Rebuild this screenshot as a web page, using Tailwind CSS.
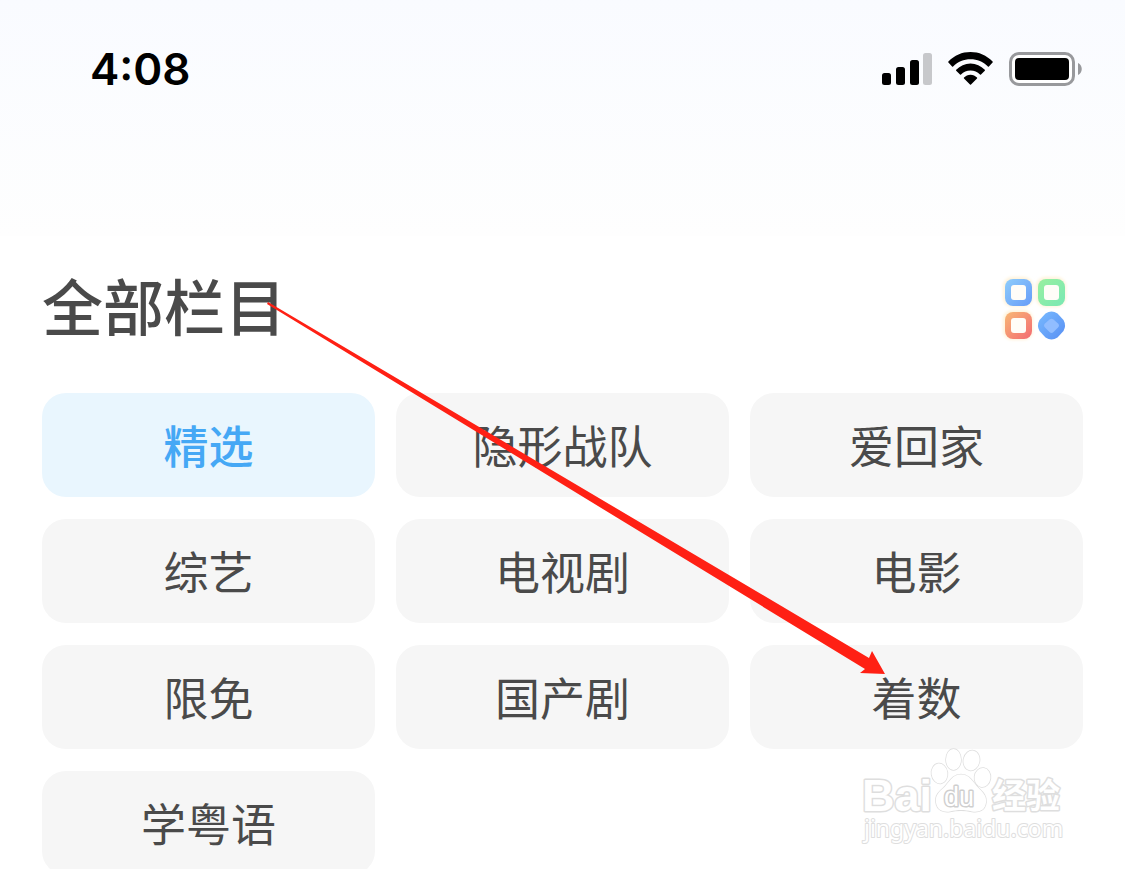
<!DOCTYPE html>
<html lang="zh-CN">
<head>
<meta charset="utf-8">
<meta name="viewport" content="width=device-width, initial-scale=1">
<title>全部栏目</title>
<script src="https://cdn.jsdelivr.net/npm/@tailwindcss/browser@4"></script>
</head>
<body class="relative h-screen overflow-hidden bg-white font-['Noto_Sans_CJK_SC',sans-serif] text-[#4a4a4a]">
<div class="h-[236px] bg-linear-to-b from-[#f9fbff] to-[#fefefe]">
  <header class="flex items-center justify-between pt-[44px] pr-[42px] pl-[90px] text-black">
    <time class="font-['Inter',sans-serif] text-[44px] leading-[50px] font-semibold">4:08</time>
    <div class="flex items-center gap-4">
      <svg class="h-[34px] w-[51px]" viewBox="0 0 51 34" role="img" aria-label="信号">
        <rect x="1" y="21" width="9" height="12" rx="2.5"/>
        <rect x="15" y="15" width="9" height="18" rx="2.5"/>
        <rect x="29" y="8" width="9" height="25" rx="2.5"/>
        <rect x="42" y="1" width="9" height="32" rx="2.5" fill="#c7c8cb"/>
      </svg>
      <svg class="h-[34px] w-[45px]" viewBox="0 0 45 34" role="img" aria-label="无线网络">
        <path d="M.4 9.600C6.500 3.200 14 0 22.500 0S38.500 3.200 44.600 9.600c.3.300.3.700 0 1l-3.700 3.800c-.3.300-.7.300-1 0C35 9.700 29.300 7.200 22.500 7.200S10 9.700 5.100 14.400c-.3.300-.7.300-1 0L.4 10.600c-.3-.3-.3-.7 0-1Z"/>
        <path d="M8.200 17.700c3.900-4 8.700-6.300 14.300-6.300s10.400 2.300 14.300 6.300c.3.300.3.700 0 1L33 22.500c-.3.300-.7.300-1 0-2.600-2.500-5.700-3.900-9.500-3.900s-6.900 1.400-9.500 3.900c-.3.300-.7.300-1 0l-3.800-3.800c-.3-.3-.3-.7 0-1Z"/>
        <path d="M16 25.600c1.700-1.700 3.900-2.800 6.500-2.800s4.800 1.100 6.500 2.800c.3.300.3.700 0 1L23 32.600c-.3.300-.7.300-1 0l-6-6c-.3-.3-.3-.7 0-1Z"/>
      </svg>
      <svg class="h-[34px] w-[74px]" viewBox="0 0 74 34" role="img" aria-label="电池">
        <rect x="1.500" y="1.500" width="63" height="31" rx="8.500" fill="#fff" stroke="#98999c" stroke-width="3"/>
        <rect x="6" y="6" width="54" height="22" rx="4"/>
        <path d="M69 11c5 2 5 10 0 12Z" fill="#98999c"/>
      </svg>
    </div>
  </header>
</div>
<main class="px-[42px]">
  <div class="flex items-center justify-between pt-[33px] pr-[13px]">
    <h1 class="pb-2 text-[61px] leading-[72px] font-medium">全部栏目</h1>
    <button type="button" aria-label="切换布局" class="size-[70px]">
      <svg class="size-full" viewBox="0 0 70 70" fill="none">
        <defs>
          <linearGradient id="blue" x1="0" y1="0" x2="1" y2="1"><stop stop-color="#8fcdfb"/><stop offset="1" stop-color="#669bf8"/></linearGradient>
          <linearGradient id="green" x1="0" y1="0" x2="1" y2="1"><stop stop-color="#9af0a0"/><stop offset="1" stop-color="#79e8b4"/></linearGradient>
          <linearGradient id="red" x1="0" y1="0" x2="1" y2="1"><stop stop-color="#f8b875"/><stop offset="1" stop-color="#f36b72"/></linearGradient>
          <linearGradient id="gem" x1="0" y1="0" x2="1" y2="1"><stop stop-color="#78baff"/><stop offset="1" stop-color="#588ff3"/></linearGradient>
          <filter id="glow" x="-20%" y="-20%" width="140%" height="140%"><feGaussianBlur stdDeviation="1.500"/></filter>
        </defs>
        <g filter="url(#glow)" fill="#fff3da">
          <rect x="3" y="3" width="30" height="30" rx="9"/><rect x="36" y="3" width="30" height="30" rx="9"/><rect x="3" y="36" width="30" height="30" rx="9"/>
        </g>
        <rect x="5" y="5" width="27" height="27" rx="8" fill="url(#blue)"/>
        <rect x="11" y="11" width="15" height="15" rx="3" fill="#fffdf8"/>
        <rect x="38" y="5" width="27" height="27" rx="8" fill="url(#green)"/>
        <rect x="44" y="11" width="15" height="15" rx="3" fill="#fffdf8"/>
        <rect x="5" y="38" width="27" height="27" rx="8" fill="url(#red)"/>
        <rect x="11" y="44" width="15" height="15" rx="3" fill="#fffdf8"/>
        <path d="M45.500 39.500q6-4 12 0l6 6.500q3 5.500 0 11l-6 6.500q-6 4-12 0l-6-6.500q-3-5.500 0-11Z" fill="url(#gem)"/>
        <path d="M49.500 45.500q2-1.500 4 0l4.500 4q2 2 0 4l-4.500 4.500q-2 2-4 0L45 53.500q-2-2 0-4Z" fill="#91bdff"/>
      </svg>
    </button>
  </div>
  <nav aria-label="栏目" class="mt-[44px] grid grid-cols-3 gap-x-[21px] gap-y-[22px] text-[45px] leading-[60px]">
    <button type="button" aria-current="true" class="h-[104px] rounded-3xl bg-[#e9f6fe] font-medium text-[#45a8f5]">精选</button>
    <button type="button" class="h-[104px] rounded-3xl bg-[#f6f6f6]">隐形战队</button>
    <button type="button" class="h-[104px] rounded-3xl bg-[#f6f6f6]">爱回家</button>
    <button type="button" class="h-[104px] rounded-3xl bg-[#f6f6f6]">综艺</button>
    <button type="button" class="h-[104px] rounded-3xl bg-[#f6f6f6]">电视剧</button>
    <button type="button" class="h-[104px] rounded-3xl bg-[#f6f6f6]">电影</button>
    <button type="button" class="h-[104px] rounded-3xl bg-[#f6f6f6]">限免</button>
    <button type="button" class="h-[104px] rounded-3xl bg-[#f6f6f6]">国产剧</button>
    <button type="button" class="h-[104px] rounded-3xl bg-[#f6f6f6]">着数</button>
    <button type="button" class="h-[104px] rounded-3xl bg-[#f6f6f6]">学粤语</button>
  </nav>
</main>
<!-- Arrow from the heading to the 着数 button -->
<svg class="pointer-events-none absolute top-[300px] left-[265px] h-[380px] w-[625px]" viewBox="265 300 625 380" aria-hidden="true">
  <path d="M268 302 869 658 872 651 885 674 860 673 865 669 267 304Z" fill="#ff2014"/>
</svg>
<!-- Watermark -->
<svg class="pointer-events-none absolute top-[740px] left-[850px] h-[110px] w-[230px]" viewBox="0 0 230 110" fill="#fff" stroke="#dedede" stroke-width="3" stroke-linejoin="round" paint-order="stroke" role="img" aria-label="Baidu 经验 jingyan.baidu.com">
  <text x="12" y="71" font-family="Liberation Sans" font-weight="700" font-size="45">Bai</text>
  <g stroke-width="1.500">
    <ellipse cx="89.500" cy="33.500" rx="8" ry="10" transform="rotate(-8 89.500 33.500)"/>
    <ellipse cx="103.500" cy="19.500" rx="7.500" ry="10.500"/>
    <ellipse cx="121.500" cy="20.500" rx="8" ry="10" transform="rotate(12 121.500 20.500)"/>
    <ellipse cx="132.500" cy="37.500" rx="8" ry="9.500" transform="rotate(8 132.500 37.500)"/>
    <path d="M111 34.500c-9 0-12 8-17 13-5 4-9 8-8 15 1 8 8 10 14 9 8-2 14-2 22 0 7 1 13-1 14-9 1-7-4-11-8-15-5-5-8-13-17-13Z"/>
  </g>
  <text x="94" y="66" font-family="Liberation Sans" font-weight="400" font-size="27" stroke="#cfcfcf">du</text>
  <text x="142" y="68" font-family="Noto Sans CJK SC" font-weight="700" font-size="34">经验</text>
  <text x="14" y="97" font-family="Noto Sans" font-size="23" stroke-width="2">jingyan.baidu.com</text>
</svg>
</body>
</html>
